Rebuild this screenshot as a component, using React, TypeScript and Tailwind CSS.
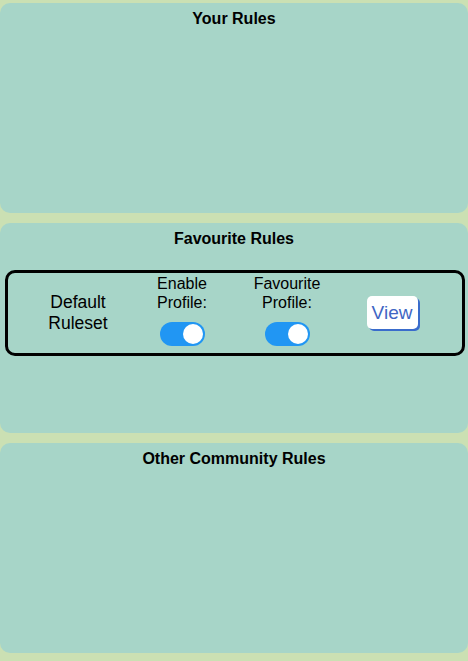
import React from "react";

function Toggle() {
  return (
    <div className="w-[45px] h-[24px] rounded-full bg-[#2196f3] flex items-center justify-end pr-[2px]">
      <div className="w-[20px] h-[20px] rounded-full bg-white" />
    </div>
  );
}

function Panel({ title, children }: { title: string; children?: React.ReactNode }) {
  return (
    <section className="h-[210px] rounded-[10px] bg-[#a7d5c8] pt-[7px]">
      <h3 className="text-center font-bold text-[16px] leading-[18px] text-black">{title}</h3>
      {children}
    </section>
  );
}

export default function App() {
  return (
    <div
      className="min-h-screen bg-[#cbe0b3] pt-[3px] flex flex-col gap-[10px]"
      style={{ fontFamily: '"Liberation Sans", Arial, sans-serif' }}
    >
      <Panel title="Your Rules" />
      <Panel title="Favourite Rules">
        <div className="mt-[22px] ml-[5px] mr-[3px] h-[86px] border-[3px] border-black rounded-[10px] grid grid-cols-[104px_104px_106px_108px] pl-[18px] items-center">
          <div className="text-center text-[17.5px] leading-[21px] text-black">
            Default
            <br />
            Ruleset
          </div>
          <div className="flex flex-col items-center mt-[-5px]">
            <div className="text-center text-[16px] leading-[18.4px] text-black">
              Enable
              <br />
              Profile:
            </div>
            <div className="mt-[10px]">
              <Toggle />
            </div>
          </div>
          <div className="flex flex-col items-center mt-[-5px]">
            <div className="text-center text-[16px] leading-[18.4px] text-black">
              Favourite
              <br />
              Profile:
            </div>
            <div className="mt-[10px]">
              <Toggle />
            </div>
          </div>
          <div className="flex justify-center">
            <button className="w-[51px] h-[33px] bg-white rounded-[5px] shadow-[2px_2px_0_#3a6ccc] text-[19px] leading-none text-[#4065c4] mr-[4px] mt-[-1px]">
              View
            </button>
          </div>
        </div>
      </Panel>
      <Panel title="Other Community Rules" />
    </div>
  );
}
